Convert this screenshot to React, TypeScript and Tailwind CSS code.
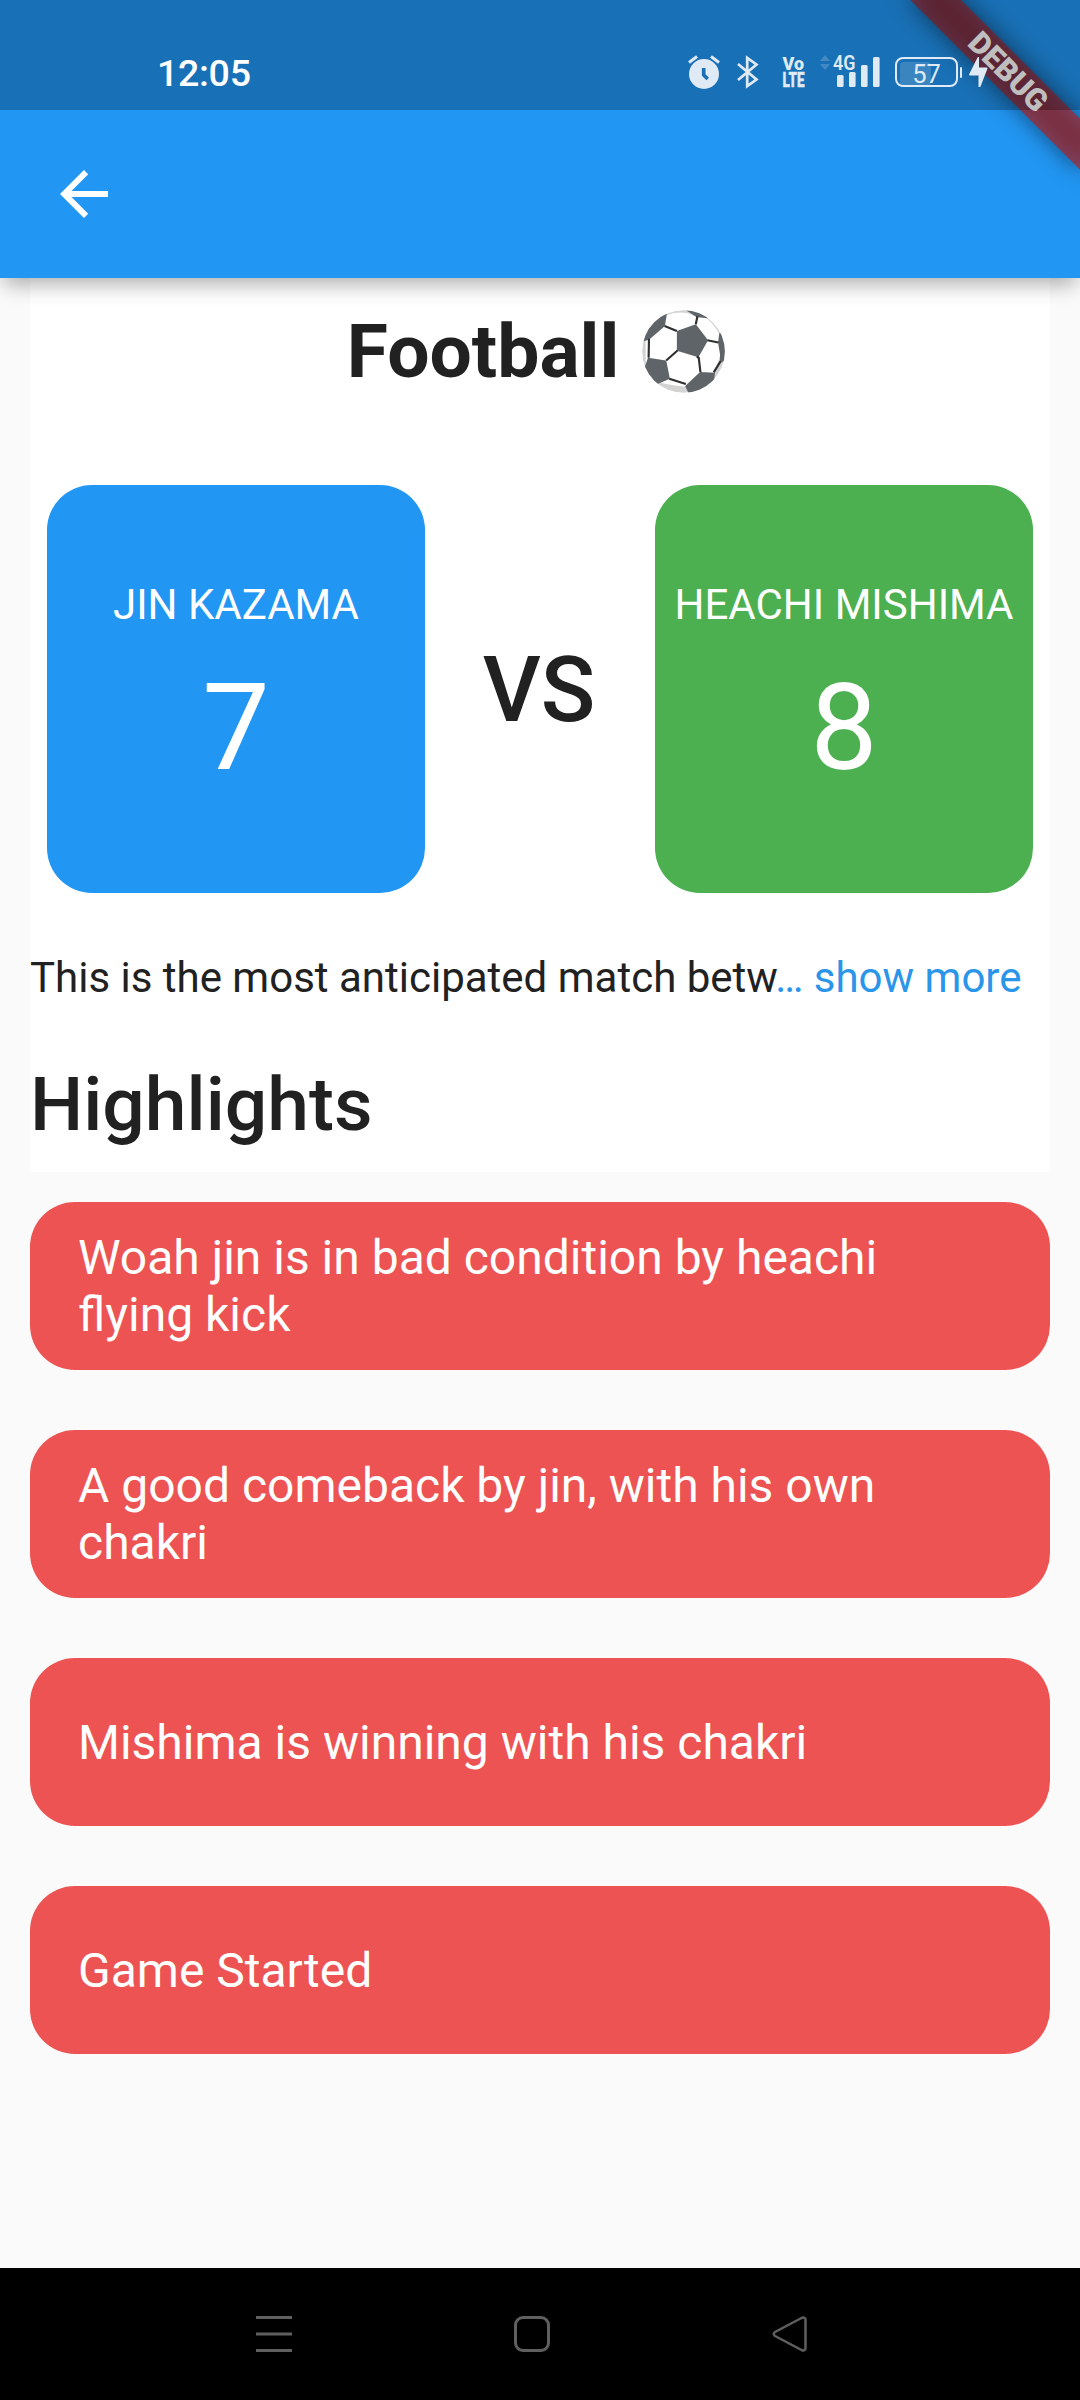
import React from "react";

const highlights = [
  "Woah jin is in bad condition by heachi flying kick",
  "A good comeback by jin, with his own chakri",
  "Mishima is winning with his chakri",
  "Game Started",
];

function AlarmIcon() {
  return (
    <svg className="ml-[27px] h-[36px] w-[34px]" viewBox="0 0 34 36" fill="none">
      <path d="M2 8.5 10 2.5M32 8.5 24 2.5" stroke="currentColor" strokeWidth="3" />
      <circle cx="17" cy="20" r="15" fill="currentColor" />
      <path d="M16.7 14v7l4 4" stroke="#1a6fb5" strokeWidth="3.6" />
    </svg>
  );
}

function BluetoothIcon() {
  return (
    <svg className="ml-[15px] h-[36px] w-[24px]" viewBox="0 0 24 36" fill="none" stroke="currentColor" strokeWidth="2.7">
      <path d="M2 10 20.5 25.5 11.2 32.2V3.8L20.5 10.5 2 26" />
    </svg>
  );
}

function SignalIcon() {
  return (
    <svg className="ml-[14px] h-[36px] w-[62px] overflow-visible" viewBox="0 0 62 36" fill="currentColor">
      <g opacity="0.22">
        <path d="M1 7 6 1l5 6zM1 10h10l-5 6z" />
      </g>
      <text x="14" y="16.2" fontFamily="Roboto" fontWeight="600" fontSize="20" textLength="22.5" lengthAdjust="spacingAndGlyphs">4G</text>
      <rect x="18" y="21" width="6.6" height="12" rx="1.5" />
      <rect x="30" y="18" width="6.6" height="15" rx="1.5" />
      <rect x="42" y="11" width="6.6" height="22" rx="1.5" />
      <rect x="54" y="3" width="6.6" height="30" rx="1.5" />
    </svg>
  );
}

function Battery() {
  return (
    <div className="ml-[14px] flex items-center">
      <div className="grid h-[30px] w-[63px] place-items-center rounded-[8px] border-2 border-current p-[3px]">
        <div className="col-start-1 row-start-1 h-full w-[31px] justify-self-start rounded-[4px] bg-white/15" />
        <span className="col-start-1 row-start-1 text-[25.5px] leading-[24px]">57</span>
      </div>
      <div className="ml-[2px] h-[11px] w-[2px] rounded bg-current" />
      <svg className="ml-[7px] h-[30px] w-[19px]" viewBox="0 0 19 30" fill="currentColor">
        <path d="M8.800 0 0 17.500q0 1 1 1h8.500V30h1.800L18.500 11.500q0-1-1-1h-7.500V0z" />
      </svg>
    </div>
  );
}

function DebugBanner() {
  return (
    <div className="pointer-events-none absolute top-0 right-0 h-[278px] w-[300px] overflow-hidden">
      <div className="absolute top-0 left-[300px] origin-top-left rotate-45">
        <div className="absolute top-[84px] left-[-120px] h-[36px] w-[240px] bg-black/50 blur-[12px]" />
        <div className="absolute top-[84px] left-[-120px] flex h-[36px] w-[240px] items-center justify-center bg-[#b71c1c]/63 text-[30.6px] leading-none font-black text-white">
          DEBUG
        </div>
      </div>
    </div>
  );
}

function StatusBar() {
  return (
    <div className="relative flex h-[110px] items-start bg-black/25 pt-[54px] text-[#dfeaf5]">
      <div className="ml-[157px] h-[36px] w-[95px] text-[37.5px] leading-[39px] font-medium tracking-[-0.3px] text-white">12:05</div>
      <div className="ml-[408px] flex items-start">
        <AlarmIcon />
        <BluetoothIcon />
        <svg className="ml-[22px] h-[36px] w-[23px] overflow-visible" viewBox="0 0 23 36" fill="currentColor" fontFamily="Roboto" fontWeight="900">
          <text x="0.500" y="16" fontSize="18.500" textLength="21.500" lengthAdjust="spacingAndGlyphs">Vo</text>
          <text x="0.500" y="33" fontSize="20" textLength="22" lengthAdjust="spacingAndGlyphs" stroke="currentColor" strokeWidth="0.400">LTE</text>
        </svg>
        <SignalIcon />
        <div className="pt-[3px]">
          <Battery />
        </div>
      </div>
    </div>
  );
}

function SoccerBall() {
  return (
    <svg className="mt-[3px] h-[83px] w-[83px]" viewBox="968 89 250 250">
      <clipPath id="ball">
        <circle cx="1093" cy="214" r="124.5" />
      </clipPath>
      <g clipPath="url(#ball)">
        <circle cx="1093" cy="214" r="125" fill="#d3d3d3" />
        <path
          fill="#fff"
          d="M1038 106Q1068 93 1104 98L1134 110 1160 113Q1185 130 1203 165L1203 225 1190 270 1184 285 1110 322Q1060 316 1022 308L979 250V180L1000 130z"
        />
        <g fill="#5e6467">
          <path d="M1073 152l57-20 37 48-29 51-65-19z" />
          <path d="M1043 100l-6 37-47 41-18 6V120l40-40z" />
          <path d="M1098 88l34 22 34 4-10-34h-50z" />
          <path d="M1201 158l-4 29 6 35v26l25-10v-80z" />
          <path d="M1098 318l45-42 45 2-3 25-35 40h-40z" />
          <path d="M978 256l8-23 55 8 11 55-37 16-45-30z" />
        </g>
        <path
          d="M1036 137l37 15M1130 132l5-24M1165 180l33 7M1133 229l6 4 5 43M1075 211l-34 30M989 176l-1 57M1050 296l50 16M1205 243l-21 34"
          fill="none"
          stroke="#303030"
          strokeWidth="6.500"
        />
      </g>
    </svg>
  );
}

function TeamCard({ name, score, color }: { name: string; score: number; color: string }) {
  return (
    <div className={`flex h-[408px] w-[378px] flex-col items-center justify-center gap-[29px] rounded-[45px] pt-px text-white ${color}`}>
      <div className="text-[42px] leading-[49px] whitespace-nowrap">{name}</div>
      <div className="text-[120px] leading-[141px]">{score}</div>
    </div>
  );
}

export default function App() {
  return (
    <div className="relative flex h-[2400px] w-[1080px] flex-col overflow-hidden bg-[#fafafa] font-[Roboto,sans-serif] text-[#212121]">
      <header className="relative z-10 h-[278px] shrink-0 bg-[#2196f3] shadow-[0_10px_20px_-4px_rgba(0,0,0,0.33)]">
        <DebugBanner />
        <StatusBar />
        <div className="flex h-[168px] items-center pl-[48px]">
          <svg className="h-[72px] w-[72px]" viewBox="0 0 24 24" fill="#fff">
            <path d="M20 11H7.83l5.59-5.59L12 4l-8 8 8 8 1.41-1.41L7.83 13H20v-2z" />
          </svg>
        </div>
      </header>

      <main className="flex-1 px-[30px]">
        <section className="h-[894px] bg-white pt-[29px]">
          <h1 className="flex h-[88px] justify-center gap-[23px] pr-[8px] text-[75px] leading-[88px] font-bold">
            Football
            <SoccerBall />
          </h1>
          <div className="mt-[90px] flex items-center justify-between px-[17px]">
            <TeamCard name="JIN KAZAMA" score={7} color="bg-[#2196f3]" />
            <div className="pt-[2px] pr-[2px] text-[90px] leading-[105px] font-medium">VS</div>
            <TeamCard name="HEACHI MISHIMA" score={8} color="bg-[#4caf50]" />
          </div>
          <p className="mt-[60px] text-[42px] leading-[49px] whitespace-nowrap">
            This is the most anticipated match betw<span className="text-[#2b95e9]">… show more</span>
          </p>
          <h2 className="mt-[58px] text-[75px] leading-[88px] font-medium">Highlights</h2>
        </section>

        <ul className="mt-[30px] flex flex-col gap-[60px]">
          {highlights.map((text) => (
            <li key={text} className="flex h-[168px] items-center rounded-[45px] bg-[#ec5352] px-[48px] text-[48px] leading-[57px] text-white">
              <span className="w-[850px]">{text}</span>
            </li>
          ))}
        </ul>
      </main>

      <nav className="flex h-[132px] shrink-0 items-start bg-black pt-[48px] text-[#5f5f5f]">
        <svg className="ml-[256px] h-[36px] w-[36px]" viewBox="0 0 36 36" stroke="currentColor" strokeWidth="3">
          <path d="M0 1.5h36M0 18h36M0 34.5h36" />
        </svg>
        <div className="ml-[222px] h-[36px] w-[36px] rounded-[9px] border-[3px] border-current" />
        <svg className="ml-[222px] h-[36px] w-[36px]" viewBox="0 0 36 36" fill="none" stroke="currentColor" strokeWidth="2.5" strokeLinejoin="round">
          <path d="M3 16Q.5 18 3 20L29.500 34Q33.500 35.500 33.500 32V4Q33.500.5 29.500 2z" />
        </svg>
      </nav>
    </div>
  );
}
